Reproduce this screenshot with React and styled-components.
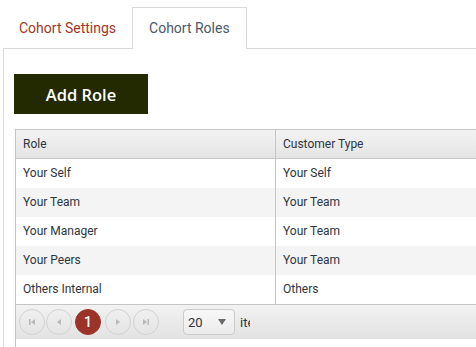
import styled, { createGlobalStyle } from "styled-components";

const Global = createGlobalStyle`
    html, body {
        margin: 0;
        padding: 0;
        background: #fff;
        overflow: hidden;
    }
    body {
        font-family: Roboto, "Liberation Sans", Arial, sans-serif;
    }
`

const Page = styled.div`
    width: 476px;
    height: 347px;
    overflow: hidden;
    padding: 7px 0 0 3px;
    box-sizing: border-box;
`

const TabList = styled.div`
    display: flex;
    border-bottom: 1px solid #d9d9d9;
    width: 600px;
`

const Tab = styled.div`
    height: 40px;
    padding: 0 ${p => p.$active ? "16px" : "15px"};
    display: flex;
    align-items: center;
    font-size: 14px;
    border: 1px solid ${p => p.$active ? "#d9d9d9" : "transparent"};
    border-bottom: none;
    margin-bottom: -1px;
    background: #fff;
    color: ${p => p.$active ? "#4a5868" : "#a3361f"};
    padding-bottom: ${p => p.$active ? "1px" : "0"};
`

const Panel = styled.div`
    border-left: 1px solid #d9d9d9;
    padding: 25px 0 0 10px;
    height: 400px;
`

const AddButton = styled.button`
    width: 134px;
    height: 40px;
    background: #232a02;
    border: none;
    color: #fff;
    font-family: "Open Sans", "Liberation Sans", sans-serif;
    font-size: 16.5px;
    font-weight: 550;
    cursor: pointer;
    display: block;
`

const Grid = styled.div`
    margin-top: 15px;
    margin-left: 1px;
    width: 560px;
    border: 1px solid #c5c5c5;
    border-right: none;
    height: 240px;
`

const Row = styled.div`
    display: grid;
    grid-template-columns: 259px 1fr;
    height: 29px;
    background: ${p => p.$alt ? "#f4f4f4" : "#fff"};
    font-size: 12px;
    color: #2d3540;
`

const HeaderRow = styled(Row)`
    background: linear-gradient(#f3f3f3, #e4e4e4);
    border-bottom: 1px solid #c5c5c5;
    height: 28px;
`

const Cell = styled.div`
    display: flex;
    align-items: center;
    padding-left: 7px;
    padding-bottom: 1px;
    border-left: ${p => p.$first ? "none" : "1px solid #c5c5c5"};
`

const Pager = styled.div`
    border-top: 1px solid #c5c5c5;
    height: 34px;
    background: linear-gradient(#f2f2f2, #e2e2e2);
    display: flex;
    align-items: center;
    padding-left: 3px;
    font-size: 13px;
    color: #2d3540;
`

const PageBtn = styled.div`
    width: 26px;
    height: 26px;
    box-sizing: border-box;
    border-radius: 50%;
    border: 1px solid ${p => p.$active ? "#9c3328" : "#d2d2d2"};
    background: ${p => p.$active ? "#9c3328" : "transparent"};
    color: #fff;
    display: flex;
    align-items: center;
    justify-content: center;
    margin-right: ${p => p.$gap || 0}px;
    font-size: 14px;
    font-weight: 500;
`

const SizeSelect = styled.div`
    margin-left: 24px;
    width: 52px;
    height: 26px;
    box-sizing: border-box;
    border: 1px solid #cbcbcb;
    border-radius: 4px;
    background: linear-gradient(#f7f7f7, #ececec);
    display: flex;
    align-items: center;
    justify-content: space-between;
    padding: 0 8px 0 4px;
    font-size: 13px;
    color: #2d3540;
`

const PerPage = styled.span`
    margin-left: 5px;
    width: 10px;
    overflow: hidden;
    white-space: nowrap;
    font-size: 13px;
`

const Icon = ({ type }) => {
    const c = "#b8b8b8";
    return <svg width="8" height="8" viewBox="0 0 8 8">
        {type === "first" && <><rect x="1" y="1" width="1.5" height="6" fill={c} /><path d="M7 1 L3 4 L7 7Z" fill={c} /></>}
        {type === "prev" && <path d="M6 1 L2 4 L6 7Z" fill={c} />}
        {type === "next" && <path d="M2 1 L6 4 L2 7Z" fill={c} />}
        {type === "last" && <><path d="M1 1 L5 4 L1 7Z" fill={c} /><rect x="5.5" y="1" width="1.5" height="6" fill={c} /></>}
    </svg>
}

const roles = [
    ["Your Self", "Your Self"],
    ["Your Team", "Your Team"],
    ["Your Manager", "Your Team"],
    ["Your Peers", "Your Team"],
    ["Others Internal", "Others"],
];

const App = () => {
    return <Page>
        <Global />
        <TabList>
            <Tab>Cohort Settings</Tab>
            <Tab $active>Cohort Roles</Tab>
        </TabList>
        <Panel>
            <AddButton>Add Role</AddButton>
            <Grid>
                <HeaderRow>
                    <Cell $first>Role</Cell>
                    <Cell>Customer Type</Cell>
                </HeaderRow>
                {roles.map((r, i) => (
                    <Row key={i} $alt={i % 2 === 1}>
                        <Cell $first>{r[0]}</Cell>
                        <Cell>{r[1]}</Cell>
                    </Row>
                ))}
                <Pager>
                    <PageBtn $gap={1}><Icon type="first" /></PageBtn>
                    <PageBtn $gap={3}><Icon type="prev" /></PageBtn>
                    <PageBtn $active $gap={4}>1</PageBtn>
                    <PageBtn $gap={2}><Icon type="next" /></PageBtn>
                    <PageBtn><Icon type="last" /></PageBtn>
                    <SizeSelect>
                        <span>20</span>
                        <svg width="8" height="6" viewBox="0 0 8 6"><path d="M0 0 L8 0 L4 6Z" fill="#6a6a6a" /></svg>
                    </SizeSelect>
                    <PerPage>items per page</PerPage>
                </Pager>
            </Grid>
        </Panel>
    </Page>
}

export default App;
